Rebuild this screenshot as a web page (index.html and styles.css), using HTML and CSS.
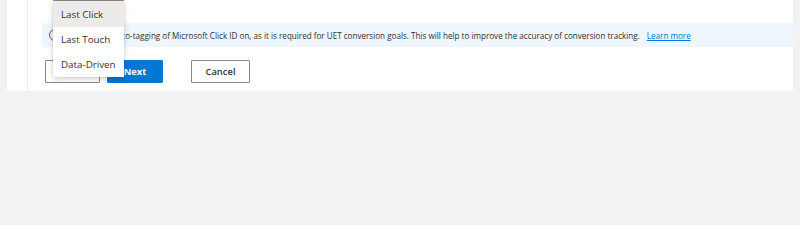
FILE: index.html
```html
<!DOCTYPE html>
<html lang="en">
<head>
  <meta charset="UTF-8">
  <meta name="viewport" content="width=device-width, initial-scale=1.0">
  <title>Conversion goal settings</title>
  <link rel="stylesheet" href="styles.css">
</head>
<body>
  <div class="card">
    <div class="side"></div>
    <div class="content">
      <div class="field">
        <div class="select"></div>
        <ul class="dropdown">
          <li class="option selected">Last Click</li>
          <li class="option">Last Touch</li>
          <li class="option">Data-Driven</li>
        </ul>
      </div>

      <div class="info-bar">
        <svg class="info-icon" width="12" height="12" viewBox="0 0 12 12" fill="none" stroke="currentColor" stroke-width="1">
          <circle cx="6" cy="6" r="5.5"/>
          <path d="M6 5v4"/>
          <circle cx="6" cy="3.3" r="0.4"/>
        </svg>
        <span class="info-text">Please keep auto-tagging of Microsoft Click ID on, as it is required for UET conversion goals. This will help to improve the accuracy of conversion tracking.</span>
        <a class="learn-more" href="#">Learn more</a>
      </div>

      <div class="actions">
        <button class="btn">Back</button>
        <button class="btn btn-primary">Next</button>
        <button class="btn btn-cancel">Cancel</button>
      </div>
    </div>
  </div>
</body>
</html>
```

FILE: styles.css
```css
* {
  margin: 0;
  padding: 0;
  box-sizing: border-box;
  font-family: "Open Sans", "Noto Sans", sans-serif;
}

body {
  background: #f1f2f4;
  height: 225px;
  overflow: hidden;
}

.card {
  display: flex;
  background: white;
  margin: 0 7px;
  height: 91px;
}

.side {
  width: 21px;
  border-right: 1px solid #ececec;
}

.content {
  flex: 1;
  padding-left: 14px;
}

.field {
  position: relative;
  margin-left: 11px;
  width: 71px;
}

.select {
  height: 24px;
  margin-top: -23px;
  border: 1px solid #8a8886;
  border-top: none;
  background: white;
}

.dropdown {
  position: absolute;
  top: 25px;
  left: 0;
  width: 71px;
  list-style: none;
  background: white;
  box-shadow: 0 2px 6px rgba(0, 0, 0, 0.18), 0 0 2px rgba(0, 0, 0, 0.1);
  z-index: 2;
}

.option {
  height: 25px;
  line-height: 25px;
  padding-left: 8px;
  font-size: 9.8px;
  color: #323130;
  white-space: nowrap;
}

.option.selected {
  background: #edebe9;
}

.info-bar {
  display: flex;
  align-items: center;
  height: 24px;
  margin-top: 22px;
  padding-left: 7px;
  background: #eff6fc;
  font-size: 8.1px;
  color: #323130;
  white-space: nowrap;
}

.info-icon {
  color: #605e5c;
  margin-right: 5px;
  flex-shrink: 0;
}

.learn-more {
  margin-left: 7px;
  color: #0078d4;
}

.actions {
  display: flex;
  gap: 7px;
  margin-top: 13px;
  padding-left: 3px;
}

.btn {
  height: 23px;
  width: 55px;
  border: 1px solid #8a8886;
  border-radius: 1px;
  background: white;
  color: #323130;
  font-size: 9.4px;
  font-weight: 600;
}

.btn-primary {
  width: 56px;
  background: #0078d4;
  border-color: #0078d4;
  color: white;
  font-weight: 700;
}

.btn-cancel {
  width: 59px;
  margin-left: 21px;
}
```
